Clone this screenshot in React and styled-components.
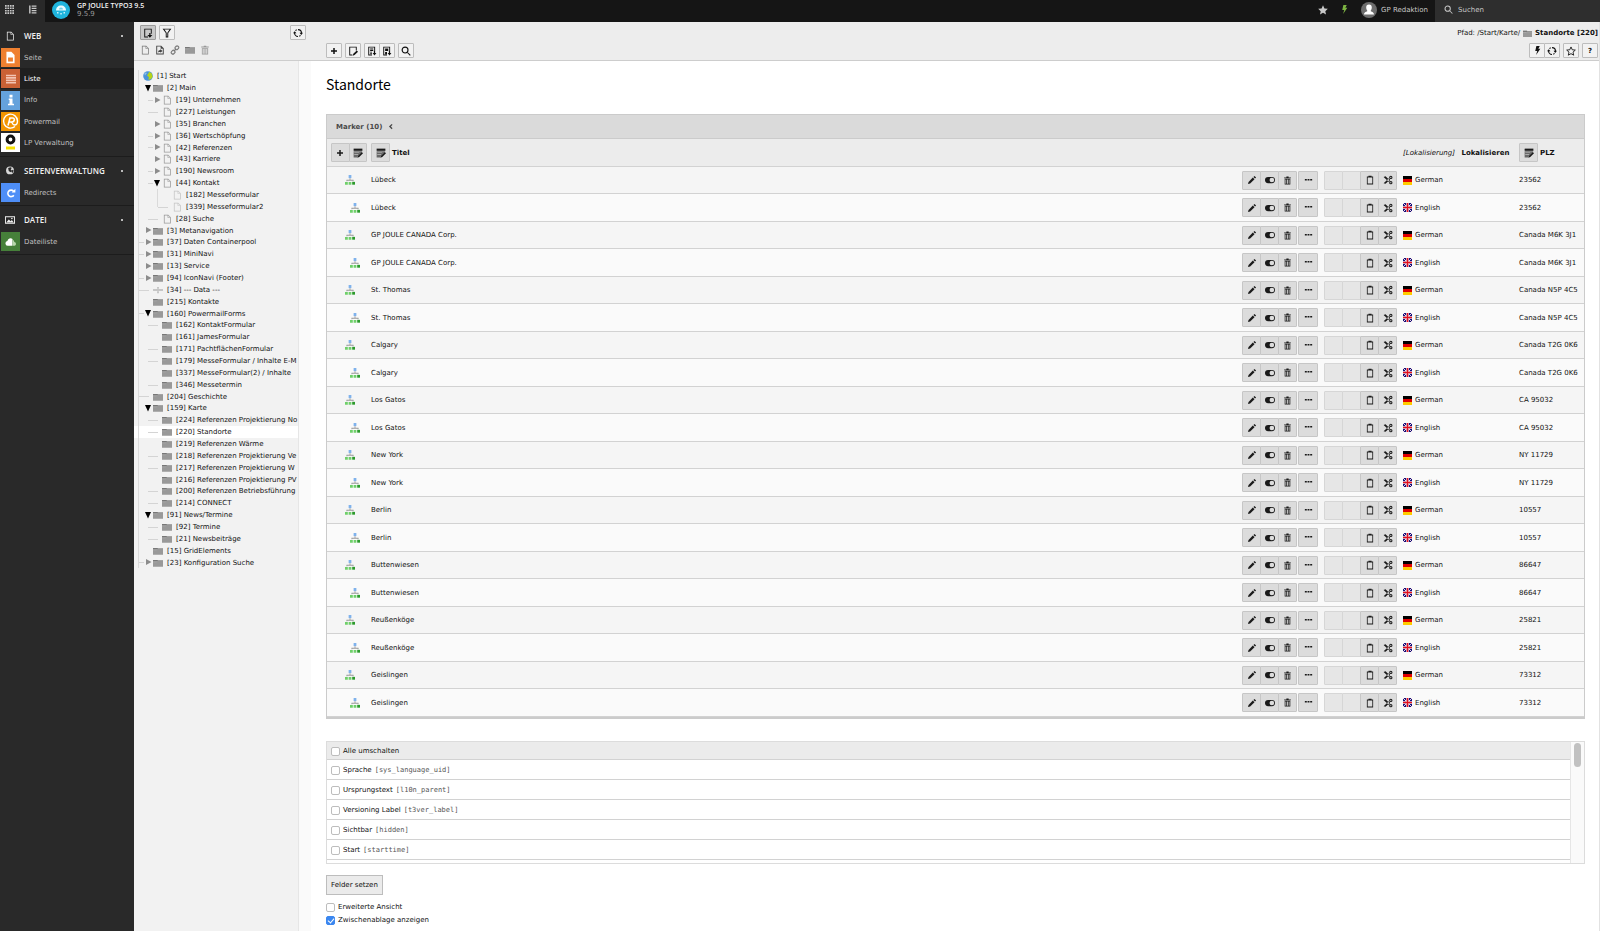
import React, { useState } from "react";
import styled, { createGlobalStyle, css } from "styled-components";

const GlobalStyle = createGlobalStyle`
  * { box-sizing: border-box; }
  body {
    margin: 0;
    background: #fff;
    color: #111;
    font-family: "DejaVu Sans", Verdana, sans-serif;
    font-size: 7px;
    line-height: 10px;
  }
  button, input { font: inherit; color: inherit; }
  button { padding: 0; margin: 0; cursor: pointer; }
  ul { list-style: none; margin: 0; padding: 0; }
  a { color: inherit; text-decoration: none; }
  svg { display: block; flex: none; }
`;

/* icons */
const shapes = {
  plus: <path d="M6.500 2h3v4.500H14v3H9.500V14h-3V9.500H2v-3h4.500z" />,
  page: <path d="M3 1h7l4 4v10H3zM4.200 2.200v11.600h8.600V6H9V2.200zM10 2.400V5h2.600z" fillRule="evenodd" />,
  pageNew: <><path d="M2 1h12v8h-1.500V2.500h-9v11H8V15H2z" /><path d="M10 8h2v3h3l-4 4.500L7 11h3z" /></>,
  pageOpen: <><path d="M2 1h8l4 4v10H2zM3.500 2.500v11h9V6H9V2.500z" fillRule="evenodd" /><path d="M5 12c0-3 1.500-4 3.500-4V6.500l3.500 3-3.500 3V11C7 11 6 11 5 12z" /></>,
  pageEdit: <><path d="M2 1h12v6h-1.500V2.500h-9v11H7V15H2z" /><path d="M14 7l2 2-5.500 5.500L7.500 15.500l1-3z" /></>,
  pageImport: <><path d="M2 1h11v7h-1.500V2.500h-8v11H8V15H2z" /><path d="M5 4h5v1.500H5zM5 6.500h5V8H5zM5 9h3v1.500H5zM5 11.500h3V13H5z" /><path d="M11 8h2v3h2l-3 4-3-4h2z" /></>,
  pageExport: <><path d="M2 1h11v7h-1.500V2.500h-8v11H8V15H2z" /><path d="M5 4h5v4H5zM5 9.500h3v4H5z" /><path d="M11 8h2v3h2l-3 4-3-4h2z" /></>,
  filter: <path d="M1 1h14l-5 7v7H6V8zm2.900 1.500L7.500 7.500v6h1v-6l3.600-5z" fillRule="evenodd" />,
  link: <g fill="none" stroke="currentColor" strokeWidth="1.800"><rect x="8" y="2" width="6" height="5" rx="2" transform="rotate(-45 11 4.500)" /><rect x="2" y="9" width="6" height="5" rx="2" transform="rotate(-45 5 11.500)" /><path d="M6 10l4-4" /></g>,
  folder: <><path d="M0 3h7l1 1h8v10H0z" /><path d="M0 3h7l1 1h8v1.500H0z" fill="#777" /><path d="M0 6h6l1-1h9" fill="none" stroke="#c8c8c8" strokeWidth=".7" /></>,
  trash: <path d="M6 1h4v1.500h4V4H2V2.500h4zM3 5h10v10H3zm1.300 1.200v7.600h1.500V6.200zm2.900 0v7.600h1.500V6.200zm2.900 0v7.600h1.500V6.200z" fillRule="evenodd" />,
  refresh: <><path d="M8 2.500a5.500 5.500 0 0 1 5.500 5.500M8 13.500A5.500 5.500 0 0 1 2.500 8M4 4.200A5.500 5.500 0 0 1 6 2.800M12 11.800a5.500 5.500 0 0 1-2 1.400" fill="none" stroke="currentColor" strokeWidth="1.800" /><path d="M10.500 7.500h5.500L13.200 11zM0 8.500h5.500L2.700 5z" /></>,
  search: <><circle cx="6.500" cy="6.500" r="4.700" fill="none" stroke="currentColor" strokeWidth="1.800" /><path d="M10 11l1-1 4.500 4.500-1.200 1.200z" /></>,
  bolt: <path d="M6 0h6L9.500 5H13L5.500 16 7.500 9H4z" />,
  star: <path d="M8 .5l2.300 5 5.400.6-4 3.700 1.100 5.500L8 12.500l-4.800 2.800 1.100-5.500-4-3.700 5.400-.6z" />,
  starLine: <path d="M8 1.500l2 4.500 4.900.5-3.700 3.300 1.100 4.900L8 12.200l-4.300 2.500 1.100-4.900L1.100 6.500 6 6z" fill="none" stroke="currentColor" strokeWidth="1.400" />,
  pencil: <><path d="M12 1.500L14.500 4l-1.700 1.700-2.500-2.500z" /><path d="M9.300 4L12 6.700 5 13.500 1.500 14.500l1-3.500z" /></>,
  toggle: <><rect x="0" y="3" width="16" height="10" rx="5" /><circle cx="11" cy="8" r="3.700" fill="#ddd" /></>,
  dots: <path d="M1.500 5.500H5V8H1.500zM6.300 5.500h3.400V8H6.300zM11 5.500h3.500V8H11z" />,
  clipboard: <path d="M5.500 1h5v1.500H13V15H3V2.500h2.500zM4.300 4v9.600h7.400V4z" fillRule="evenodd" />,
  scissors: <><path d="M1 3l3-1 7.500 7-2 2zM1 13l3 1 7.500-7-2-2z" /><circle cx="12.500" cy="3.800" r="1.800" fill="none" stroke="currentColor" strokeWidth="1.700" /><circle cx="12.500" cy="12.200" r="1.800" fill="none" stroke="currentColor" strokeWidth="1.700" /></>,
  tableEdit: <><path d="M1 1h14v3.500H1z" /><path d="M1 5h14L8 12l-1 3H1z" opacity=".6" /><path d="M2 7h8v1H2zM2 10h6v1H2z" fill="#fff" opacity=".6" /><path d="M14 6.500l2 2-6 6-3 1 1-3z" /></>,
  angle: <path d="M10.500 2L4.500 8l6 6 2.200-2.200L9 8l3.700-3.800z" />,
  grid: <path d="M0 0h3v3H0zM4.300 0h3v3h-3zM8.700 0h3v3h-3zM13 0h3v3h-3zM0 4.300h3v3H0zM4.300 4.300h3v3h-3zM8.700 4.300h3v3h-3zM13 4.300h3v3h-3zM0 8.700h3v3H0zM4.300 8.700h3v3h-3zM8.700 8.700h3v3h-3zM13 8.700h3v3h-3zM0 13h3v3H0zM4.300 13h3v3h-3zM8.700 13h3v3h-3zM13 13h3v3h-3z" />,
  listTree: <path d="M2 1h2.500v14H2zM6.500 1H15v2H6.500zM6.500 5H15v2H6.500zM6.500 9H15v2H6.500zM6.500 13H15v2H6.500z" />,
  globe: <><circle cx="8" cy="7" r="6.300" fill="#d8d8d8" /><path d="M5 3l4-1 2 1-2 2 2 2-2 3-3-2zM12 6l2 1-2 4-2-2z" fill="#292929" /></>,
  image: <><path d="M0 2h16v12H0zm1.500 1.500v9h13v-9z" fillRule="evenodd" /><path d="M2 12l4-5 3 3 2-2 3 4z" /><circle cx="11" cy="5.500" r="1.300" /></>,
  earth: <><circle cx="8" cy="8" r="7.700" fill="#4b94d8" /><path d="M10 1l4 3 1.500 5-3 4-4 1 1-4-3-3 2-3z" fill="#b4d41b" /><path d="M2 4l3-2 1 2-3 3z" fill="#8fc0e8" /></>,
  divider: <path d="M0 7h16v1.800H0zM7.200 3h1.600v3H7.200zM7.200 10h1.600v3H7.200z" />,
  record: <><path d="M5.800 0h4.400v5H5.800z" fill="#7fb2ec" /><path d="M7.300 5h1.400v2.500h5V10h-1.400V9H3.700v1H2.300V7.500h5z" fill="#999" /><path d="M0 11h4.500v4.500H0zM5.800 11h4.400v4.500H5.800z" fill="#6fd06a" /><path d="M11.500 11H16v4.500h-4.500z" fill="#2c9a2c" /></>,
  mPage: <><path d="M3 1h6l4 4v10H3z" fill="#fff" /><path d="M5 8h6v5H5z" fill="#ef8030" /></>,
  mList: <path d="M0 1h16v2.600H0zM0 4.800h16v2.600H0zM0 8.600h16v2.600H0zM0 12.400h16V15H0z" fill="#f3c4b3" />,
  mInfo: <path d="M6 1h4v3.500H6zM5 6h5v7h2v2H4v-2h2V8H5z" fill="#fff" />,
  mRedirect: <><path d="M12.500 11.500A5.200 5.200 0 1 1 12 5" fill="none" stroke="#fff" strokeWidth="2.500" /><path d="M9 7h6V1z" fill="#fff" /></>,
  mCloud: <><path d="M3.500 13a3.300 3.300 0 0 1-.3-6.500A4.200 4.200 0 0 1 10 4v9z" fill="#fff" /><path d="M10.500 5a4 4 0 0 1 2 3 2.600 2.600 0 0 1 .5 5h-2.500z" fill="#b8d7ac" /></>,
};

const Icon = ({ name, size = 10 }) => (
  <svg width={size} height={size} viewBox="0 0 16 16" fill="currentColor" aria-hidden="true">{shapes[name]}</svg>
);

const Powermail = () => (
  <svg width="19" height="19" viewBox="0 0 19 19" aria-hidden="true" fill="none" stroke="#fff">
    <path d="M14 14.500A7 7 0 1 1 16.500 9c0 3-1.500 4-3 4s-2-1-3-3" strokeWidth="1.400" />
    <path d="M7 13.500L9 6h2.500c3 0 2 4-.5 4H8" strokeWidth="1.600" />
  </svg>
);

const LpLogo = () => (
  <svg width="19" height="19" viewBox="0 0 19 19" aria-hidden="true">
    <circle cx="9.500" cy="6.500" r="3.400" fill="#fff" stroke="#111" strokeWidth="3" />
    <path d="M5 13.500h9v3H5z" fill="#f5e000" />
  </svg>
);

const BrandLogo = () => (
  <svg width="18" height="18" viewBox="0 0 18 18" aria-hidden="true">
    <circle cx="9" cy="9" r="9" fill="#1fb4dc" />
    <path d="M4 9.500C4 6.500 6 4.500 9 4.500s5 2 5 5z" fill="#e8fafd" />
    <path d="M7 8.500a2 2 0 0 1 4 0z" fill="#1fb4dc" opacity=".6" />
    <path d="M5 11h1.500v1.500H5zM8.300 12h1.500v1.500H8.300zM11.500 11H13v1.500h-1.500z" fill="#c8f1fa" />
  </svg>
);

const Avatar = () => (
  <svg width="16" height="16" viewBox="0 0 16 16" aria-hidden="true">
    <circle cx="8" cy="8" r="8" fill="#6d6d6d" />
    <path d="M8 2.500c2 0 2.800 1.300 2.800 3S9.800 8.600 9.600 9c.4.700 3.400.9 3.400 3.500H3C3 9.900 6 9.700 6.400 9 6.200 8.600 5.200 7.200 5.200 5.500S6 2.500 8 2.500z" fill="#fff" />
  </svg>
);

const Flag = ({ lang }) => lang === "German" ? (
  <svg width="9" height="9" viewBox="0 0 9 9" aria-hidden="true">
    <path d="M0 0h9v3H0z" fill="#000" /><path d="M0 3h9v3H0z" fill="#e00000" /><path d="M0 6h9v3H0z" fill="#fc0" />
  </svg>
) : (
  <svg width="9" height="9" viewBox="0 0 9 9" aria-hidden="true">
    <path d="M0 0h9v9H0z" fill="#10107c" />
    <path d="M0 0l9 9M9 0L0 9" stroke="#f4d8e0" strokeWidth="1" />
    <path d="M3.200 0h2.600v3.200H9v2.600H5.800V9H3.200V5.800H0V3.200h3.200z" fill="#fff" />
    <path d="M3.700 0h1.600v3.700H9v1.600H5.300V9H3.700V5.300H0V3.700h3.700z" fill="#e01020" />
  </svg>
);

/* topbar */
const Page = styled.div`
  min-height: 100vh;
  display: flex;
  flex-direction: column;
`;

const Topbar = styled.header`
  height: 22px;
  display: flex;
  align-items: center;
  background: #151515;
  color: #c8c8c8;
`;

const TopToggles = styled.div`
  width: 45px;
  height: 22px;
  display: flex;
  background: #292929;
`;

const TopButton = styled.button`
  flex: 1;
  display: flex;
  align-items: center;
  justify-content: center;
  padding: 0 3px 3px 0;
  border: 0;
  background: none;
`;

const Brand = styled.a`
  flex: 1;
  display: flex;
  align-items: center;
  gap: 7px;
  padding: 0 0 2px 7px;
`;

const BrandText = styled.span`
  display: flex;
  flex-direction: column;
  line-height: 9px;
  color: #999;
`;

const BrandName = styled.strong`
  font: 600 7px/9px "Open Sans", "Noto Sans", sans-serif;
  color: #f4f4f4;
`;

const TopTools = styled.nav`
  display: flex;
  align-items: center;
  gap: 12px;
  padding: 0 7px 3px 0;
`;

const ToolLink = styled.a`
  display: flex;
  align-items: center;
  gap: 4px;
  color: ${({ $color }) => $color || "#c8c8c8"};
`;

const SearchBox = styled.label`
  width: 165px;
  height: 22px;
  display: flex;
  align-items: center;
  gap: 5px;
  padding: 0 9px 3px;
  background: #2e2e2e;
`;

const SearchInput = styled.input`
  width: 100%;
  padding: 0;
  border: 0;
  background: none;
  outline: none;
  &::placeholder { color: #c8c8c8; opacity: 1; }
`;

/* module menu */
const Body = styled.div`
  flex: 1;
  display: grid;
  grid-template-columns: 134px 177px minmax(0, 1fr);
`;

const ModuleMenu = styled.nav`
  background: #292929;
  color: #c0c0c0;
`;

const ModuleGroup = styled.section`
  padding: 3px 0 2px;
  border-bottom: 1px solid #1c1c1c;
  &:first-child { padding-bottom: 3px; }
`;

const GroupTitle = styled.button`
  width: 100%;
  height: 22px;
  display: flex;
  align-items: center;
  padding: 0 11px 0 5px;
  border: 0;
  background: none;
  font: 600 8px/12px "Open Sans", "Noto Sans", sans-serif;
  color: #f0f0f0;
`;

const GroupName = styled.span`
  flex: 1;
  padding-left: 9px;
  text-align: left;
`;

const Caret = styled.span`
  width: 2px;
  height: 2px;
  background: #bbb;
`;

const ModuleItem = styled.li`
  height: 21px;
  &:nth-child(3n) { height: 22px; }
`;

const ModuleLink = styled.a`
  height: 100%;
  display: flex;
  align-items: center;
  gap: 4px;
  padding-left: 1px;
  ${({ $active }) => $active && css`
    background: #1f1f1f;
    color: #fff;
  `}
`;

const ModuleIcon = styled.span`
  width: 19px;
  height: 19px;
  display: flex;
  align-items: center;
  justify-content: center;
  background: ${({ $color }) => $color};
`;

/* page tree */
const TreePanel = styled.aside`
  display: flex;
  flex-direction: column;
  background: #fafafa;
`;

const DocHeader = styled.div`
  height: 39px;
  display: flex;
  flex-direction: column;
  justify-content: space-between;
  padding: ${({ $tree }) => ($tree ? "3px 5px 5px 6px" : "6px 1px 2px 15px")};
  background: #ededed;
  border-bottom: 1px solid #cdcdcd;
`;

const Bar = styled.div`
  display: flex;
  align-items: center;
  justify-content: ${({ $end }) => ($end ? "flex-end" : "space-between")};
  gap: 4px;
`;

const Group = styled.div`
  display: flex;
  align-items: center;
  gap: ${({ $gap }) => $gap || 3}px;
`;

const ButtonGroup = styled.div`
  display: flex;
  > * + * { margin-left: -1px; }
`;

const IconButton = styled.button`
  width: 16px;
  height: 15px;
  display: flex;
  align-items: center;
  justify-content: center;
  background: ${({ $active }) => ($active ? "#c9c9c9" : "#f2f2f2")};
  border: 1px solid ${({ $active }) => ($active ? "#9c9c9c" : "#bdbdbd")};
  border-radius: 1px;
  font-weight: 700;
`;

const PlainButton = styled.button`
  border: 0;
  background: none;
  color: ${({ $color }) => $color || "#777"};
`;

const Tree = styled.ul`
  flex: 1;
  width: 165px;
  padding-top: 9px;
  overflow: hidden;
  background: #f2f2f2;
  border-right: 1px solid #e6e6e6;
`;

const treeIndent = [9, 5, 14, 24];

const TreeRow = styled.li`
  height: 12px;
  display: flex;
  align-items: center;
  padding-left: ${({ $level }) => treeIndent[$level]}px;
  white-space: nowrap;
  background: linear-gradient(#dadada, #dadada) 4px 0 / 1px 100% no-repeat ${({ $active }) => ($active ? "#fff" : "#f2f2f2")};
  ${({ $level }) => $level === 3 && css`
    background: linear-gradient(#dadada, #dadada) 4px 0 / 1px 100% no-repeat,
      linear-gradient(#dadada, #dadada) 23px 0 / 1px ${({ $last }) => ($last ? "50%" : "100%")} no-repeat;
  `}
  &:nth-child(7n) { height: 11px; }
`;

const Dash = styled.span`
  width: ${({ $short }) => ($short ? 5 : 10)}px;
  height: 1px;
  margin-right: ${({ $short }) => ($short ? 0 : 4)}px;
  flex: none;
  background: #d4d4d4;
  visibility: ${({ $hidden }) => ($hidden ? "hidden" : "visible")};
  ${TreeRow}:nth-child(3n + 2) & { visibility: hidden; }
`;

const Toggle = styled.button`
  width: 9px;
  height: 10px;
  padding-left: 1px;
  flex: none;
  display: flex;
  align-items: center;
  justify-content: flex-start;
  border: 0;
  background: none;
  color: ${({ $open }) => ($open ? "#000" : "#8c8c8c")};
`;

const NodeLink = styled.a`
  display: flex;
  align-items: center;
  gap: 4px;
`;

const NodeIcon = styled.span`
  color: ${({ $faint }) => ($faint ? "#c4c4c4" : "#999")};
`;

/* content */
const Main = styled.main`
  border-right: 1px solid #e2e2e2;
`;

const Content = styled.div`
  padding: 13px 14px 0 15px;
`;

const Title = styled.h1`
  margin: 0 0 20px;
  font: 400 14px/20px "Noto Sans CJK SC", "Open Sans", sans-serif;
  color: #000;
`;

const Panel = styled.section`
  border: 1px solid #cbcbcb;
  border-bottom-width: 2px;
`;

const PanelHeading = styled.h2`
  height: 24px;
  display: flex;
  align-items: center;
  gap: 5px;
  margin: 0;
  padding-left: 9px;
  font-size: 7px;
  color: #4a4a4a;
  background: #dadada;
  border-bottom: 1px solid #cbcbcb;
`;

const Table = styled.table`
  width: 100%;
  table-layout: fixed;
  border-collapse: separate;
  border-spacing: 0;
`;

const Col = styled.col`
  width: ${({ $w }) => $w}px;
`;

const HeadRow = styled.tr`
  height: 28px;
  background: #ececec;
`;

const Row = styled.tr`
  height: 27px;
  background: #f5f5f5;
  &:nth-child(even) {
    height: 28px;
    background: #fafafa;
  }
`;

const Cell = styled.td`
  padding: ${({ $flush }) => ($flush ? "0 0 0 4px" : "0 4px")};
  border-bottom: 1px solid #d2d2d2;
  text-align: left;
  vertical-align: middle;
  white-space: nowrap;
`;

const RecordIcon = styled.span`
  display: block;
  padding-left: ${({ $child }) => ($child ? 19 : 14)}px;
`;

const CellButton = styled.button`
  width: ${({ $wide }) => ($wide ? 20 : 19)}px;
  height: 19px;
  display: flex;
  align-items: center;
  justify-content: center;
  background: #dcdcdc;
  border: 1px solid #c6c6c6;
  border-radius: 1px;
  color: #1a1a1a;
  &:disabled {
    background: #e6e6e6;
    border-color: #d6d6d6;
  }
`;

const LocalizeLabel = styled.em`
  font-weight: 400;
  margin-right: 4px;
`;

/* field selector */
const FieldPanel = styled.div`
  height: 123px;
  display: flex;
  margin-top: 22px;
  border: 1px solid #dcdcdc;
  overflow: hidden;
`;

const FieldList = styled.ul`
  flex: 1;
`;

const FieldRow = styled.li`
  height: 20px;
  display: flex;
  align-items: center;
  padding-left: 4px;
  border-bottom: 1px solid #d2d2d2;
  &:first-child {
    height: 18px;
    background: #ebebeb;
  }
`;

const FieldEdge = styled.li`
  height: 20px;
`;

const Track = styled.div`
  width: 14px;
  padding: 1px 3px;
  background: #fafafa;
  border-left: 1px solid #e6e6e6;
`;

const Thumb = styled.div`
  width: 7px;
  height: 24px;
  border-radius: 4px;
  background: #c1c1c1;
`;

const CheckLabel = styled.label`
  display: flex;
  align-items: center;
  gap: 3px;
  height: 13px;
`;

const Checkbox = styled.input`
  appearance: none;
  width: 9px;
  height: 9px;
  margin: 2px 0 0;
  border: 1px solid #bdbdbd;
  border-radius: 2px;
  background: #fff;
  &:checked {
    background: #3b87f0;
    border-color: #3b87f0;
  }
  &:checked::after {
    content: "";
    display: block;
    width: 3px;
    height: 5px;
    margin-left: 2px;
    border: solid #fff;
    border-width: 0 1px 1px 0;
    transform: rotate(40deg);
  }
`;

const Code = styled.code`
  font: 7px/10px "DejaVu Sans Mono", monospace;
  color: #555;
`;

const SubmitButton = styled.button`
  display: block;
  height: 20px;
  margin: 11px 0 5px;
  padding: 0 4px;
  background: #ebebeb;
  border: 1px solid #bdbdbd;
`;

const modules = [
  { title: "WEB", icon: "page", items: [
    { name: "Seite", icon: <Icon name="mPage" size={13} />, color: "#ef8030" },
    { name: "Liste", icon: <Icon name="mList" />, color: "#ca6135", active: true },
    { name: "Info", icon: <Icon name="mInfo" size={12} />, color: "#65a2dc" },
    { name: "Powermail", icon: <Powermail />, color: "#f29400" },
    { name: "LP Verwaltung", icon: <LpLogo />, color: "#fff" },
  ] },
  { title: "SEITENVERWALTUNG", icon: "globe", items: [
    { name: "Redirects", icon: <Icon name="mRedirect" />, color: "#4e8ef7" },
  ] },
  { title: "DATEI", icon: "image", items: [
    { name: "Dateiliste", icon: <Icon name="mCloud" size={12} />, color: "#46803a" },
  ] },
];

// [level, id, title, icon, toggle]
const nodes = [
  [0, 1, "Start", "earth"],
  [1, 2, "Main", "folder", "open"],
  [2, 19, "Unternehmen", "page", "closed"],
  [2, 227, "Leistungen", "page"],
  [2, 35, "Branchen", "page", "closed"],
  [2, 36, "Wertschöpfung", "page", "closed"],
  [2, 42, "Referenzen", "page", "closed"],
  [2, 43, "Karriere", "page", "closed"],
  [2, 190, "Newsroom", "page", "closed"],
  [2, 44, "Kontakt", "page", "open"],
  [3, 182, "Messeformular", "page"],
  [3, 339, "Messeformular2", "page"],
  [2, 28, "Suche", "page"],
  [1, 3, "Metanavigation", "folder", "closed"],
  [1, 37, "Daten Containerpool", "folder", "closed"],
  [1, 31, "MiniNavi", "folder", "closed"],
  [1, 13, "Service", "folder", "closed"],
  [1, 94, "IconNavi (Footer)", "folder", "closed"],
  [1, 34, "--- Data ---", "divider"],
  [1, 215, "Kontakte", "folder"],
  [1, 160, "PowermailForms", "folder", "open"],
  [2, 162, "KontaktFormular", "folder"],
  [2, 161, "JamesFormular", "folder"],
  [2, 171, "PachtflächenFormular", "folder"],
  [2, 179, "MesseFormular / Inhalte E-M", "folder"],
  [2, 337, "MesseFormular(2) / Inhalte", "folder"],
  [2, 346, "Messetermin", "folder"],
  [1, 204, "Geschichte", "folder"],
  [1, 159, "Karte", "folder", "open"],
  [2, 224, "Referenzen Projektierung No", "folder"],
  [2, 220, "Standorte", "folder"],
  [2, 219, "Referenzen Wärme", "folder"],
  [2, 218, "Referenzen Projektierung Ve", "folder"],
  [2, 217, "Referenzen Projektierung W", "folder"],
  [2, 216, "Referenzen Projektierung PV", "folder"],
  [2, 200, "Referenzen Betriebsführung", "folder"],
  [2, 214, "CONNECT", "folder"],
  [1, 91, "News/Termine", "folder", "open"],
  [2, 92, "Termine", "folder"],
  [2, 21, "Newsbeiträge", "folder"],
  [1, 15, "GridElements", "folder"],
  [1, 23, "Konfiguration Suche", "folder", "closed"],
];

const places = [
  ["Lübeck", "23562"],
  ["GP JOULE CANADA Corp.", "Canada M6K 3J1"],
  ["St. Thomas", "Canada N5P 4C5"],
  ["Calgary", "Canada T2G 0K6"],
  ["Los Gatos", "CA 95032"],
  ["New York", "NY 11729"],
  ["Berlin", "10557"],
  ["Buttenwiesen", "86647"],
  ["Reußenköge", "25821"],
  ["Geislingen", "73312"],
];

const records = places.flatMap(([title, plz]) =>
  ["German", "English"].map((lang) => ({ title, plz, lang }))
);

const fields = [
  ["Sprache", "sys_language_uid"],
  ["Ursprungstext", "l10n_parent"],
  ["Versioning Label", "t3ver_label"],
  ["Sichtbar", "hidden"],
  ["Start", "starttime"],
];

const TreeNode = ({ node }) => {
  const [level, id, title, icon, toggle] = node;
  return (
    <TreeRow $level={level} $active={id === 220} $last={id === 339}>
      {level > 0 && <Dash $short={!!toggle} $hidden={id === 182} />}
      {toggle && (
        <Toggle $open={toggle === "open"} aria-label={title}>
          <svg width="7" height="7" viewBox="0 0 7 7" fill="currentColor" aria-hidden="true">
            <path d={toggle === "open" ? "M0 0h6L3 6.500z" : "M1 0l5.500 3L1 6z"} />
          </svg>
        </Toggle>
      )}
      <NodeLink href="#">
        <NodeIcon $faint={level === 3}><Icon name={icon} /></NodeIcon>
        [{id}] {title}
      </NodeLink>
    </TreeRow>
  );
};

const RecordRow = ({ record }) => (
  <Row>
    <Cell $flush><RecordIcon $child={record.lang === "English"}><Icon name="record" /></RecordIcon></Cell>
    <Cell>{record.title}</Cell>
    <Cell $flush>
      <Group $gap={6}>
        <Group $gap={1}>
          <ButtonGroup>
            <CellButton aria-label="Bearbeiten"><Icon name="pencil" /></CellButton>
            <CellButton aria-label="Verbergen"><Icon name="toggle" /></CellButton>
            <CellButton aria-label="Löschen"><Icon name="trash" size={9} /></CellButton>
          </ButtonGroup>
          <CellButton $wide aria-label="Mehr"><Icon name="dots" size={9} /></CellButton>
        </Group>
        <ButtonGroup>
          <CellButton disabled aria-label="Nach oben" />
          <CellButton disabled aria-label="Nach unten" />
          <CellButton aria-label="Kopieren"><Icon name="clipboard" /></CellButton>
          <CellButton aria-label="Ausschneiden"><Icon name="scissors" /></CellButton>
        </ButtonGroup>
      </Group>
    </Cell>
    <Cell><Group><Flag lang={record.lang} />{record.lang}</Group></Cell>
    <Cell $flush>{record.plz}</Cell>
  </Row>
);

const App = () => {
  const [extended, setExtended] = useState(false);
  const [clipboard, setClipboard] = useState(true);

  return (
    <Page>
      <GlobalStyle />
      <Topbar>
        <TopToggles>
          <TopButton aria-label="Module"><Icon name="grid" size={9} /></TopButton>
          <TopButton aria-label="Seitenbaum"><Icon name="listTree" size={9} /></TopButton>
        </TopToggles>
        <Brand href="#">
          <BrandLogo />
          <BrandText>
            <BrandName>GP JOULE TYPO3 9.5</BrandName>
            9.5.9
          </BrandText>
        </Brand>
        <TopTools>
          <ToolLink href="#" aria-label="Lesezeichen"><Icon name="star" /></ToolLink>
          <ToolLink href="#" aria-label="Cache" $color="#7cb342"><Icon name="bolt" size={9} /></ToolLink>
          <ToolLink href="#"><Avatar />GP Redaktion</ToolLink>
        </TopTools>
        <SearchBox>
          <Icon name="search" size={9} />
          <SearchInput placeholder="Suchen" aria-label="Suchen" />
        </SearchBox>
      </Topbar>

      <Body>
        <ModuleMenu>
          {modules.map((group) => (
            <ModuleGroup key={group.title}>
              <GroupTitle>
                <Icon name={group.icon} />
                <GroupName>{group.title}</GroupName>
                <Caret />
              </GroupTitle>
              <ul>
                {group.items.map((item) => (
                  <ModuleItem key={item.name}>
                    <ModuleLink href="#" $active={item.active}>
                      <ModuleIcon $color={item.color}>{item.icon}</ModuleIcon>
                      {item.name}
                    </ModuleLink>
                  </ModuleItem>
                ))}
              </ul>
            </ModuleGroup>
          ))}
        </ModuleMenu>

        <TreePanel>
          <DocHeader $tree>
            <Bar>
              <Group>
                <IconButton $active aria-label="Neue Seite"><Icon name="pageNew" /></IconButton>
                <IconButton aria-label="Filter"><Icon name="filter" /></IconButton>
              </Group>
              <IconButton aria-label="Aktualisieren"><Icon name="refresh" /></IconButton>
            </Bar>
            <Group $gap={5}>
              <PlainButton aria-label="Standard"><Icon name="page" /></PlainButton>
              <PlainButton aria-label="Verweis" $color="#444"><Icon name="pageOpen" /></PlainButton>
              <PlainButton aria-label="Link"><Icon name="link" /></PlainButton>
              <PlainButton aria-label="Ordner" $color="#999"><Icon name="folder" /></PlainButton>
              <PlainButton aria-label="Papierkorb" $color="#999"><Icon name="trash" /></PlainButton>
            </Group>
          </DocHeader>
          <Tree>
            {nodes.map((node) => <TreeNode key={node[1]} node={node} />)}
          </Tree>
        </TreePanel>

        <Main>
          <DocHeader>
            <Bar $end>
              <Group>Pfad: /Start/Karte/ <NodeIcon><Icon name="folder" size={9} /></NodeIcon><b>Standorte [220]</b></Group>
            </Bar>
            <Bar>
              <Group>
                <IconButton aria-label="Neuer Datensatz"><Icon name="plus" size={8} /></IconButton>
                <IconButton aria-label="Seite bearbeiten"><Icon name="pageEdit" /></IconButton>
                <ButtonGroup>
                  <IconButton aria-label="CSV"><Icon name="pageImport" /></IconButton>
                  <IconButton aria-label="Export"><Icon name="pageExport" /></IconButton>
                </ButtonGroup>
                <IconButton aria-label="Suche"><Icon name="search" /></IconButton>
              </Group>
              <Group>
                <ButtonGroup>
                  <IconButton aria-label="Cache leeren"><Icon name="bolt" size={9} /></IconButton>
                  <IconButton aria-label="Neu laden"><Icon name="refresh" /></IconButton>
                </ButtonGroup>
                <IconButton aria-label="Lesezeichen"><Icon name="starLine" /></IconButton>
                <IconButton aria-label="Hilfe">?</IconButton>
              </Group>
            </Bar>
          </DocHeader>

          <Content>
            <Title>Standorte</Title>
            <Panel>
              <PanelHeading>Marker (10) <Icon name="angle" size={7} /></PanelHeading>
              <Table>
                <colgroup><Col $w={40} /><col /><Col $w={161} /><Col $w={116} /><Col $w={69} /></colgroup>
                <thead>
                  <HeadRow>
                    <Cell as="th" $flush>
                      <ButtonGroup>
                        <CellButton aria-label="Neu"><Icon name="plus" size={8} /></CellButton>
                        <CellButton aria-label="Alle bearbeiten"><Icon name="tableEdit" /></CellButton>
                      </ButtonGroup>
                    </Cell>
                    <Cell as="th"><Group $gap={2}><CellButton aria-label="Titel bearbeiten"><Icon name="tableEdit" /></CellButton>Titel</Group></Cell>
                    <Cell as="th" />
                    <Cell as="th"><LocalizeLabel>[Lokalisierung]</LocalizeLabel> Lokalisieren</Cell>
                    <Cell as="th" $flush><Group $gap={2}><CellButton aria-label="PLZ bearbeiten"><Icon name="tableEdit" /></CellButton>PLZ</Group></Cell>
                  </HeadRow>
                </thead>
                <tbody>
                  {records.map((record) => <RecordRow key={record.title + record.lang} record={record} />)}
                </tbody>
              </Table>
            </Panel>

            <FieldPanel>
              <FieldList>
                <FieldRow><CheckLabel><Checkbox type="checkbox" />Alle umschalten</CheckLabel></FieldRow>
                {fields.map(([label, name]) => (
                  <FieldRow key={name}>
                    <CheckLabel><Checkbox type="checkbox" />{label} <Code>[{name}]</Code></CheckLabel>
                  </FieldRow>
                ))}
                <FieldEdge />
              </FieldList>
              <Track><Thumb /></Track>
            </FieldPanel>

            <SubmitButton>Felder setzen</SubmitButton>
            <CheckLabel>
              <Checkbox type="checkbox" checked={extended} onChange={(e) => setExtended(e.target.checked)} />
              Erweiterte Ansicht
            </CheckLabel>
            <CheckLabel>
              <Checkbox type="checkbox" checked={clipboard} onChange={(e) => setClipboard(e.target.checked)} />
              Zwischenablage anzeigen
            </CheckLabel>
          </Content>
        </Main>
      </Body>
    </Page>
  );
};

export default App;
